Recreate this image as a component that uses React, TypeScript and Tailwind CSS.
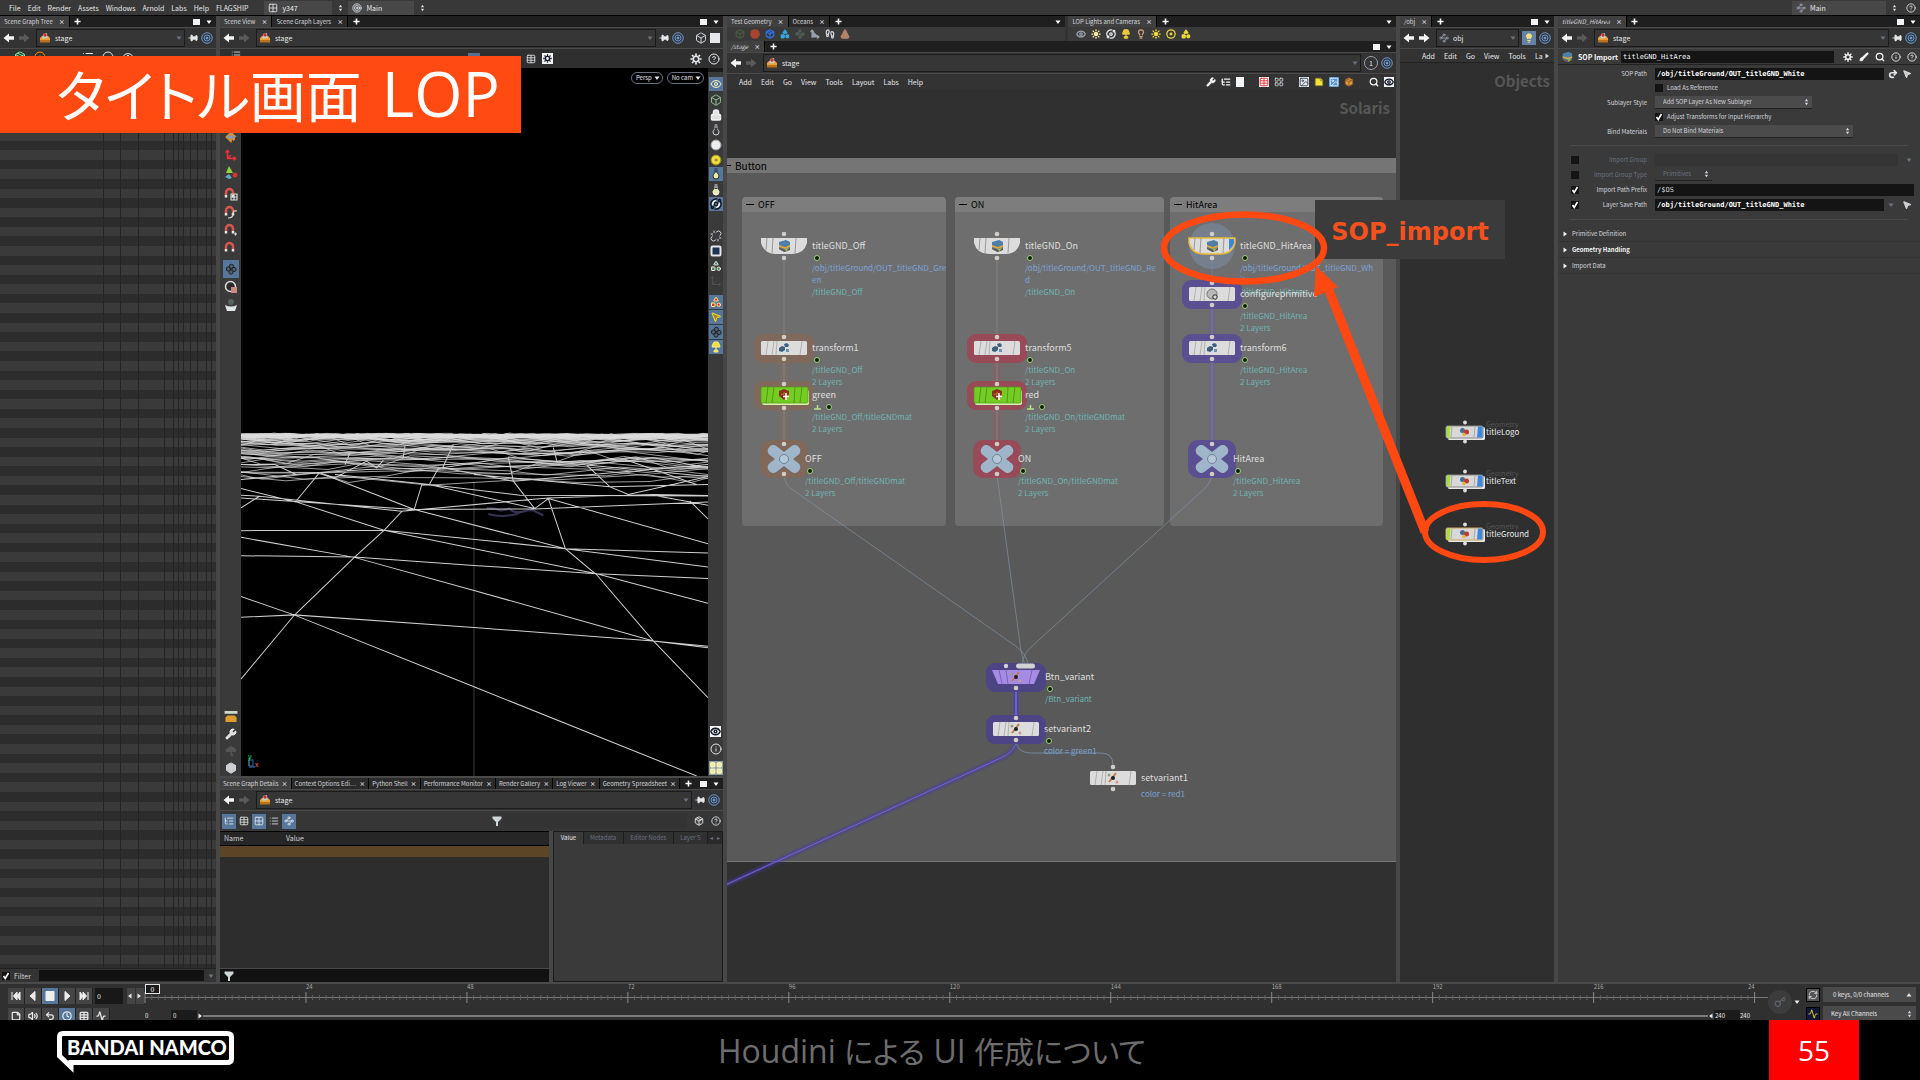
import type { ReactNode } from "react";
import {
  Activity, Box, Brush, Circle, CircleHelp, Clock, Cone, Disc, Eye, Footprints, Grid2x2,
  Image, Info, Key, Lamp, Lightbulb, LayoutGrid, List, ListTree, Lock, MousePointer2, Move3d, Orbit, Package, Pin,
  RefreshCw, Rotate3d, Search, Shapes, Square, StickyNote, Sun, Table, Target, Umbrella, Undo2, Unlink, Volume2,
  Waypoints, Wrench,
} from "lucide-react";

const ui = "font-['Noto_Sans_CJK_JP','Noto_Sans',sans-serif]";

/* ---------- small shared pieces ---------- */

const Down = ({ className = "" }: { className?: string }) => (
  <svg viewBox="0 0 6 6" className={`h-1.5 w-1.5 shrink-0 ${className}`}><path d="M0.5 1.5h5L3 5z" fill="currentColor" /></svg>
);

const UpDown = () => (
  <svg viewBox="0 0 6 12" className="h-2.5 w-[5px] shrink-0 text-gray-300"><path d="M1 5l2-3 2 3zM1 7l2 3 2-3z" fill="currentColor" /></svg>
);

const Arrow = ({ flip }: { flip?: boolean }) => (
  <svg viewBox="0 0 12 10" className={`h-2.5 w-3 shrink-0 ${flip ? "-scale-x-100" : ""}`}><path d="M0.500 5L6 0.500V3.300H11V6.700H6V9.500z" fill="currentColor" /></svg>
);

const Gear = ({ className = "h-3 w-3" }: { className?: string }) => (
  <svg viewBox="-6 -6 12 12" className={`shrink-0 ${className}`} fill="none" stroke="currentColor">
    <circle r="2.800" strokeWidth="1.800" />
    <path d="M0-5.600V-3.500M0 3.500V5.600M-5.600 0H-3.500M3.500 0H5.600M-4-4L-2.500-2.500M2.500 2.500L4 4M-4 4L-2.500 2.500M2.500-2.500L4-4" strokeWidth="1.700" />
  </svg>
);

const MagnetIcon = ({ extra }: { extra?: string }) => (
  <svg viewBox="0 0 14 14" className="h-3.5 w-3.5" fill="none">
    <path d="M2 8V5.500a3.500 3.500 0 0 1 7 0V8" stroke="#d8574f" strokeWidth="2.500" />
    <path d="M2 8v2.500M9 8v2.500" stroke="#e8e8e8" strokeWidth="2.500" />
    {extra && <path d={extra} stroke="#d8d8d8" strokeWidth="1.200" />}
  </svg>
);

const PickIcon = () => (
  <svg viewBox="0 0 14 14" className="h-3 w-3" fill="#55606a" stroke="#12181f">
    <circle cx="4" cy="7" r="2.500" /><circle cx="7.500" cy="4" r="2.500" /><circle cx="10.500" cy="7.500" r="2.500" /><circle cx="7" cy="10.500" r="2.500" />
  </svg>
);

const StageIcon = () => (
  <svg viewBox="0 0 12 12" className="h-3 w-3 shrink-0">
    <path d="M1 6l2-2h6l2 2v4H1z" fill="#e9a23b" />
    <path d="M1 8h10v2.500H1z" fill="#b9711c" />
    <path d="M3.500 6.500L4 2l4-1 .5 5z" fill="#c9d0d4" />
    <circle cx="6" cy="3" r="1.800" fill="#c8352b" />
  </svg>
);

const Radar = () => (
  <button aria-label="Follow selection" className="shrink-0">
    <svg viewBox="0 0 12 12" className="h-3 w-3" fill="none" stroke="#6f8fb8">
      <circle cx="6" cy="6" r="5.300" fill="#2c3c52" /><circle cx="6" cy="6" r="3" /><circle cx="6" cy="6" r="1" fill="#a9c2e4" />
    </svg>
  </button>
);

const PinButton = () => (
  <button aria-label="Pin" className="shrink-0 text-gray-200"><Pin className="h-2.5 w-2.5 rotate-90" fill="currentColor" /></button>
);

type TabsProps = { tabs: string[]; active?: number; italic?: boolean; square?: boolean; grow?: boolean };

function Tabs({ tabs, active = 0, italic, square = true, grow }: TabsProps) {
  return (
    <div className="flex h-[11px] shrink-0 items-stretch bg-[#1f1f1f] text-[6px] leading-[11px] text-gray-300">
      {tabs.map((t, i) => (
        <button
          key={t}
          className={`flex items-center justify-between border-r border-black whitespace-nowrap ${grow ? "flex-auto gap-0.5 px-[3px]" : "gap-1.5 px-1"} ${i === active ? "bg-[#404040]" : "bg-[#2a2a2a]"} ${italic ? "italic" : ""}`}
        >
          {t}<span className="font-bold not-italic">×</span>
        </button>
      ))}
      <button aria-label="New tab" className="flex w-4 shrink-0 items-center justify-center text-white">
        <svg viewBox="0 0 8 8" className="h-[7px] w-[7px]"><path d="M4 0.500v7M0.500 4h7" stroke="currentColor" strokeWidth="1.800" /></svg>
      </button>
      {!grow && <span className="flex-1" />}
      <span className="flex shrink-0 items-center gap-1.5 px-1 text-white">
        {square && <span className="h-1.5 w-[7px] bg-gray-100" />}
        <Down />
      </span>
    </div>
  );
}

type PathProps = { value?: string; icon?: ReactNode; forward?: boolean; children?: ReactNode };

function PathBar({ value = "stage", icon = <StageIcon />, forward, children }: PathProps) {
  return (
    <div className="flex h-[22px] shrink-0 items-center gap-[3px] border-y border-[#4a4a4a] bg-[#333] px-[3px]">
      <button aria-label="Back" className="text-gray-100"><Arrow /></button>
      <button aria-label="Forward" className={forward ? "text-gray-100" : "text-[#5a5a5a]"}><Arrow flip /></button>
      <div className="ml-[3px] flex h-[18px] min-w-0 flex-1 items-center gap-1 border border-[#1b1b1b] bg-[#363636] pr-0.5 pl-0.5">
        {icon}
        <input aria-label="Path" defaultValue={value} className="w-full min-w-0 flex-1 bg-transparent text-[7px] leading-[12px] text-gray-200 outline-none" />
        <Down className="text-gray-500" />
      </div>
      {children}
    </div>
  );
}

const Menu = ({ items }: { items: string[] }) => (
  <nav className="flex items-center gap-[9px] text-[7px] leading-[14px] text-gray-200">
    {items.map((m) => <button key={m}>{m}</button>)}
  </nav>
);

/* ---------- menu bar ---------- */

function MenuBar() {
  return (
    <header className="flex h-4 shrink-0 items-center border-b border-black bg-[#383838] pl-[9px] text-[7px] leading-[14px] text-gray-200">
      <nav className="flex gap-[7px]">
        {["File", "Edit", "Render", "Assets", "Windows", "Arnold", "Labs", "Help", "FLAGSHIP"].map((m) => <button key={m}>{m}</button>)}
      </nav>
      <button className="ml-4 flex h-[14px] w-[68px] items-center gap-1 bg-[#484848] px-1"><Grid2x2 className="h-2.5 w-2.5" />y347</button>
      <span className="mx-1 flex w-2 justify-center"><UpDown /></span>
      <button className="flex h-[14px] w-[66px] items-center gap-1 bg-[#484848] px-1"><Target className="h-2.5 w-2.5" />Main</button>
      <span className="mx-1 flex w-2 justify-center"><UpDown /></span>
      <span className="flex-1" />
      <button className="flex h-[14px] w-[94px] items-center gap-1 bg-[#484848] px-1"><Waypoints className="h-2.5 w-2.5 text-gray-400" />Main</button>
      <span className="mx-1 flex w-2 justify-center"><UpDown /></span>
      <button aria-label="Help" className="mr-1 ml-1"><CircleHelp className="h-2.5 w-2.5" /></button>
    </header>
  );
}

/* ---------- scene graph tree ---------- */

const treeColumns = [103, 120, 138, 164, 173, 178, 183, 190, 197, 206, 211];

function SceneGraphTree() {
  return (
    <section className="flex min-w-0 flex-col overflow-hidden bg-[#333]">
      <Tabs tabs={["Scene Graph Tree"]} />
      <PathBar><PinButton /><Radar /></PathBar>
      <div className="flex h-[15px] shrink-0 items-center gap-2 pl-3.5 text-gray-200">
        <Package className="h-3 w-3 text-green-300" />
        <Disc className="h-3 w-3 text-orange-400" />
        <span className="w-5" />
        <List className="h-3 w-3" />
        <Circle className="h-3 w-3" />
        <Eye className="h-3 w-3" />
      </div>
      <div className="relative flex min-h-0 flex-1 flex-col">
        {Array.from({ length: 47 }, (_, i) => (
          <div key={i} className="flex flex-1 flex-col"><div className="flex-1 bg-[#2c2c2c]" /><div className="flex-1 bg-[#3a3a3a]" /></div>
        ))}
        <div className="h-1 bg-[#2c2c2c]" />
        <svg className="absolute inset-0 h-full w-full">
          {treeColumns.map((x) => <line key={x} x1={x + 0.5} x2={x + 0.5} y1="0" y2="100%" stroke="#242424" />)}
        </svg>
      </div>
      <div className="flex h-[14px] shrink-0 items-center gap-1 border-t border-[#222] pl-0.5">
        <label className="flex items-center gap-1 text-[7px] leading-[12px] text-gray-300">
          <Check on /> Filter
        </label>
        <input aria-label="Filter" className="ml-1 h-[11px] w-full min-w-0 flex-1 bg-[#111] outline-none" />
        <Down className="mr-0.5 text-gray-500" />
      </div>
    </section>
  );
}

const Check = ({ on, label }: { on?: boolean; label?: string }) => (
  <span className="relative flex h-2 w-2 shrink-0 items-center justify-center bg-[#141414]">
    <input type="checkbox" defaultChecked={on} aria-label={label} className="peer absolute inset-0 appearance-none" />
    <svg viewBox="0 0 8 8" className="pointer-events-none hidden h-2 w-2 peer-checked:block"><path d="M1.500 4l1.700 2.500L6.500 1" fill="none" stroke="#fff" strokeWidth="1.600" /></svg>
  </span>
);

/* ---------- scene view ---------- */

// deterministic noise for the far part of the ground mesh
function makeFarMesh() {
  let seed = 11;
  const rnd = () => {
    seed = (seed * 16807) % 2147483647;
    return seed / 2147483647;
  };
  const out: string[] = [];
  for (let i = 0; i < 60; i++) {
    const t = i / 60;
    const y = 310 + 125 * t * t * t;
    const step = 34 + 190 * t;
    let x = 63 - rnd() * step;
    let d = `M${x.toFixed(0)} ${y.toFixed(0)}`;
    while (x < 1480) {
      x += step * (0.4 + rnd());
      d += `L${x.toFixed(0)} ${(y + (rnd() - 0.25) * (12 + 34 * t)).toFixed(0)}`;
    }
    out.push(d);
  }
  return out.join("");
}

const farMesh = makeFarMesh();

const nearMesh = [
  "M63 1042L222 852 403 678 492 597 545 541 583 533 605 462 628 460 655 412 668 410 700 340",
  "M63 795L222 850 762 1065 1430 1332",
  "M63 857L222 850 762 888 1300 928 1464 948",
  "M63 618L403 678 762 777 1300 928 1464 944",
  "M63 673L403 677 762 702 1130 727 1464 741",
  "M63 598L492 597 1036 652 1464 665",
  "M63 472L228 512 492 597 1130 727 1464 815",
  "M298 425L583 535 1036 652 1464 707",
  "M63 492L118 495 545 540 985 500 1300 490 1464 493",
  "M1464 1098L1300 928 1130 730 1036 652 985 502 944 532 880 450 865 378",
  "M985 502L1464 637",
  "M118 495L63 530M228 510L298 425L345 440L440 390L470 410L490 388",
  "M63 500L583 535 944 533 1464 512",
  "M944 532L628 460 345 430M628 460L900 492 1464 494",
  "M1464 563L1410 510M1300 492L1464 522",
  "M1100 402L1170 467 1225 490 1464 436M880 450L1464 400M762 430L1170 467 1464 460",
  "M668 410L880 450M1100 402L1464 436M865 378L1100 402L1300 380L1464 410",
  "M63 445L228 430 440 415 668 410 865 380M63 400L165 400 228 430M390 365L375 400M555 345L550 378M1000 350L1012 395",
  "M63 368L300 380 628 385M1215 385L1430 460",
].join("");

function Viewport() {
  return (
    <div className="relative min-w-0 flex-1 overflow-hidden bg-black">
      <svg viewBox="0 0 467 706" preserveAspectRatio="none" className="h-full w-full">
        <g transform="translate(-21 262) scale(.33333)" fill="none">
          <path d="M762 450V1332" stroke="#3c3c42" strokeWidth="3" />
          <path d="M800 530q25 0 35 6t35-6M805 548q40 12 85 0q30-14 50-10l30 14M870 535q20 18 70-4" stroke="#34344e" strokeWidth="6" />
          <path d="M63 308H1464V318H63z" fill="#d8d4d6" fillOpacity=".7" />
          <path d={farMesh} stroke="#dcdcdc" strokeWidth="2.500" strokeOpacity=".85" />
          <path d={nearMesh} stroke="#cfcfcf" strokeWidth="3" />
        </g>
        <g strokeWidth="1" fill="none">
          <path d="M8 688v8" stroke="#5fae3f" /><path d="M8 697h6" stroke="#4a74c8" /><path d="M8 690h4v6h-4z" stroke="#3b62b0" />
        </g>
      </svg>
      <span className="absolute bottom-4 left-[7px] text-[7px] leading-[8px] text-green-400">y</span>
      <span className="absolute bottom-2 left-3.5 text-[7px] leading-[8px] text-red-400">x</span>
      <div className="absolute top-1 right-1 flex gap-1 text-[6px] leading-[10px] text-gray-200">
        <button className="flex items-center gap-0.5 rounded-full border border-gray-500 pr-0.5 pl-1">Persp<Down className="h-1 w-1" /></button>
        <button className="flex items-center gap-0.5 rounded-full border border-gray-500 pr-0.5 pl-1">No cam<Down className="h-1 w-1" /></button>
      </div>
    </div>
  );
}

type Tool = { name: string; icon: ReactNode; on?: boolean; gap?: string };

const leftTools: Tool[] = [
  { name: "Rotate", icon: <Rotate3d className="h-3 w-3 text-orange-400" fill="#8a9aac" /> },
  { name: "Scale", icon: <Move3d className="h-3 w-3 text-red-500" strokeWidth={3} /> },
  { name: "Pose", icon: <svg viewBox="0 0 14 14" className="h-3.5 w-3.5"><path d="M5 0l4 7H2z" fill="#8fd43a" /><path d="M1 11l4-3 3 4-3 1z" fill="#62a8c4" /><circle cx="11" cy="9" r="2.500" fill="#d0382c" /></svg> },
  { name: "Snap to grid", icon: <MagnetIcon extra="M7 7h6v6H7zM10 7v6M7 10h6" />, gap: "mt-[3px]" },
  { name: "Snap to curve", icon: <MagnetIcon extra="M4 13Q9 13 9 9T13 6" /> },
  { name: "Snap to point", icon: <MagnetIcon extra="M10 11h3M11.500 9.500v3" /> },
  { name: "Snap multi", icon: <MagnetIcon /> },
  { name: "Pick", icon: <PickIcon />, on: true, gap: "mt-[3px]" },
  { name: "Select region", icon: <svg viewBox="0 0 14 14" className="h-3.5 w-3.5"><circle cx="6.500" cy="6.500" r="5" fill="#2a2a2a" stroke="#ddd" strokeWidth="1.500" /><path d="M7 7h6v6H7z" fill="#c98a80" /></svg> },
  { name: "Tray", icon: <svg viewBox="0 0 14 14" className="h-3.5 w-3.5"><circle cx="7" cy="4" r="3" fill="#56635f" /><path d="M1 7Q7 10 13 7L11 13H3z" fill="#dfe6e6" /></svg> },
];

const rightTools: Tool[] = [
  { name: "Reference plane", icon: <Eye className="h-3 w-3 text-yellow-100" />, on: true },
  { name: "Construction plane", icon: <Box className="h-3 w-3 text-[#8fbf8a]" /> },
  { name: "Lock camera", icon: <Lock className="h-3 w-3 text-gray-100" fill="#ddd" strokeWidth={3} /> },
  { name: "No lights", icon: <Lightbulb className="h-3 w-3 rotate-180 text-gray-300" /> },
  { name: "Headlight", icon: <Circle className="h-3 w-3 text-gray-400" fill="#eee" /> },
  { name: "Dome light", icon: <Disc className="h-3 w-3 text-[#8a8030]" fill="#f1dc3c" /> },
  { name: "Normal light", icon: <Lightbulb className="h-3 w-3 rotate-180 text-[#202a20]" fill="#e9ecaa" />, on: true },
  { name: "High quality light", icon: <Lightbulb className="h-3 w-3 rotate-180 text-gray-100" fill="#e8eca8" /> },
  { name: "Shadows", icon: <Orbit className="h-3 w-3 text-[#10151c]" fill="#e8eef6" strokeWidth={3} />, on: true },
  { name: "Links", icon: <Unlink className="h-3 w-3 text-gray-300" />, gap: "mt-4" },
  { name: "Safe area", icon: <Square className="h-3 w-3 text-gray-200" fill="#1f3352" strokeWidth={4} /> },
  { name: "Materials", icon: <Shapes className="h-3 w-3 text-gray-200" fill="#4a8a4a" /> },
  { name: "Axis", icon: <Move3d className="h-3 w-3 text-[#505050]" /> },
  { name: "Color correct", icon: <Shapes className="h-3 w-3 text-yellow-200" fill="#d33" />, on: true, gap: "mt-[7px]" },
  { name: "Handles", icon: <MousePointer2 className="h-3 w-3 text-yellow-300" fill="#a08c30" />, on: true },
  { name: "Pick mode", icon: <PickIcon />, on: true },
  { name: "Guides", icon: <Lamp className="h-3 w-3 text-yellow-200" fill="#f1dc3c" />, on: true },
];

function SceneView() {
  return (
    <div className="flex min-h-0 flex-1 flex-col">
      <Tabs tabs={["Scene View", "Scene Graph Layers"]} />
      <PathBar>
        <PinButton /><Radar />
        <button aria-label="Display" className="ml-2 text-gray-300"><Box className="h-3 w-3" /></button>
        <button aria-label="Layout" className="h-2.5 w-2.5 bg-gray-200" />
      </PathBar>
      <div className="flex h-[19px] shrink-0 items-center gap-1.5 bg-[#2f2f2f] px-[3px] text-gray-200">
        <List className="mb-2 ml-2 h-2.5 w-2.5" />
        <span className="flex-[276]" />
        <span className="h-3 w-3 bg-[#56718f]" />
        <span className="flex-[44]" />
        <Table className="h-2.5 w-2.5" />
        <span className="bg-gray-100 p-px text-gray-900"><Gear className="h-[9px] w-[9px]" /></span>
        <span className="flex-[160]" />
        <button aria-label="Settings"><Gear /></button>
        <button aria-label="Help"><CircleHelp className="h-3 w-3" /></button>
      </div>
      <div className="flex min-h-0 flex-1">
        <div className="flex w-[21px] shrink-0 flex-col items-center bg-[#3a3a3a] pt-[60px]">
          {leftTools.map((t) => (
            <button key={t.name} aria-label={t.name} className={`flex h-[18px] w-4 shrink-0 items-center justify-center ${t.gap ?? ""} ${t.on ? "bg-[#56779b]" : ""}`}>{t.icon}</button>
          ))}
          <span className="flex-1" />
          <div className="flex flex-col items-center gap-[5px] pb-0.5">
            <svg viewBox="0 0 14 13" className="h-3 w-3.5"><path d="M0 0h14v3H0z" fill="#cfd6cc" /><path d="M1 7l2-2h8l2 2v5H1z" fill="#e19a2e" /></svg>
            <Wrench className="h-3 w-3 text-gray-100" fill="#ddd" />
            <Umbrella className="h-3 w-3 text-[#555]" fill="#555" />
            <Package className="h-3 w-3 text-gray-300" fill="#ccc" />
          </div>
        </div>
        <Viewport />
        <div className="flex w-[15px] shrink-0 flex-col items-center bg-[#3a3a3a]">
          <span className="mb-[5px] h-1 w-full bg-[#1a1a1a]" />
          {rightTools.map((t) => (
            <button key={t.name} aria-label={t.name} className={`flex h-[15px] w-3.5 shrink-0 items-center justify-center ${t.gap ?? ""} ${t.on ? "border-b border-[#3a3a3a] bg-[#56779b]" : ""}`}>{t.icon}</button>
          ))}
          <span className="flex-1" />
          <div className="flex flex-col items-center gap-1.5 pb-px">
            <Eye className="h-[11px] w-[11px] bg-gray-100 text-gray-900" strokeWidth={3} />
            <Info className="h-3 w-3 text-gray-200" />
            <LayoutGrid className="h-3.5 w-3.5 bg-[#8ba0a0] text-yellow-100" fill="#f0e9a0" />
          </div>
        </div>
      </div>
    </div>
  );
}

const detailTabs = [
  "Scene Graph Details", "Context Options Edi…", "Python Shell", "Performance Monitor", "Render Gallery", "Log Viewer", "Geometry Spreadsheet",
];

function SceneGraphDetails() {
  return (
    <div className="flex h-[206px] shrink-0 flex-col border-t-2 border-[#4a4a4a]">
      <Tabs tabs={detailTabs} grow />
      <PathBar><PinButton /><Radar /></PathBar>
      <div className="flex h-5 shrink-0 items-center gap-px bg-[#363636] px-0.5 text-gray-200">
        {[ListTree, Table, Grid2x2, List, Waypoints].map((Icon, i) => (
          <button key={i} aria-label={`View mode ${i + 1}`} className={`flex h-[15px] w-3.5 items-center justify-center ${i % 2 === 0 ? "bg-[#56779b]" : ""}`}><Icon className="h-2.5 w-2.5" /></button>
        ))}
        <span className="flex-[190]" />
        <Funnel />
        <input aria-label="Filter details" className="h-3.5 min-w-0 flex-[180] bg-[#333] outline-none" />
        <button aria-label="Export" className="mx-1.5 text-gray-100"><Package className="h-2.5 w-2.5" fill="#444" /></button>
        <button aria-label="Help"><CircleHelp className="h-2.5 w-2.5" /></button>
      </div>
      <div className="flex min-h-0 flex-1 gap-1 bg-[#474747]">
        <div className="flex min-w-0 flex-[330] flex-col bg-[#2d2d2d]">
          <table className="w-full table-fixed border-collapse text-left text-[7px] leading-[13px] text-gray-300">
            <thead>
              <tr className="border-y border-black bg-[#262626]">
                <th className="w-[62px] pl-1 font-normal">Name</th>
                <th className="pl-1 font-normal">Value</th>
              </tr>
            </thead>
            <tbody><tr className="h-[11px] bg-[#5b4526]"><td /><td /></tr></tbody>
          </table>
          <span className="flex-1" />
          <div className="flex h-3.5 items-center border-t border-[#4a4a4a] bg-[#111] pl-1">
            <Funnel />
            <input aria-label="Filter values" className="w-full bg-transparent outline-none" />
          </div>
        </div>
        <div className="flex min-w-0 flex-[168] flex-col border border-[#1c1c1c] bg-[#3a3a3a]">
          <div className="flex h-3 items-stretch bg-[#2a2a2a] text-[6px] leading-[12px] whitespace-nowrap text-gray-500">
            {["Value", "Metadata", "Editor Nodes", "Layer S"].map((t, i) => (
              <button key={t} className={`flex-auto border-r border-[#1c1c1c] px-1 ${i === 0 ? "bg-[#3a3a3a] text-gray-200" : "bg-[#303030]"}`}>{t}</button>
            ))}
            <button className="px-0.5" aria-label="Previous tabs">◂</button>
            <button className="px-0.5" aria-label="More tabs">▸</button>
          </div>
        </div>
      </div>
    </div>
  );
}

const Funnel = () => (
  <svg viewBox="0 0 10 10" className="h-2.5 w-2.5 shrink-0"><path d="M0.500 0.500h9v2L6 6v4H4V6L0.500 2.500z" fill="#cfd6d8" /></svg>
);

/* ---------- network nodes ---------- */

type Kind = "import" | "body" | "material" | "null" | "variant";
type NodeData = {
  name: string; kind: Kind; x: number; y: number; halo?: string; badge?: boolean; flag?: boolean; selected?: boolean;
  icon?: "stack" | "xform" | "prim" | "set"; lines?: string[]; first?: string[];
};

const brown = "#80695b";
const red = "#984a58";
const purple = "#5a4f90";

const nodes: NodeData[] = [
  { name: "titleGND_Off", kind: "import", x: 57, y: 157, badge: true, icon: "stack", first: ["/obj/titleGround/OUT_titleGND_Gre", "en"], lines: ["/titleGND_Off"] },
  { name: "transform1", kind: "body", x: 57, y: 259, halo: brown, badge: true, icon: "xform", lines: ["/titleGND_Off", "2 Layers"] },
  { name: "green", kind: "material", x: 57, y: 306, halo: brown, badge: true, flag: true, lines: ["/titleGND_Off/titleGNDmat", "2 Layers"] },
  { name: "OFF", kind: "null", x: 57, y: 370, halo: brown, badge: true, lines: ["/titleGND_Off/titleGNDmat", "2 Layers"] },
  { name: "titleGND_On", kind: "import", x: 270, y: 157, badge: true, icon: "stack", first: ["/obj/titleGround/OUT_titleGND_Re", "d"], lines: ["/titleGND_On"] },
  { name: "transform5", kind: "body", x: 270, y: 259, halo: red, badge: true, icon: "xform", lines: ["/titleGND_On", "2 Layers"] },
  { name: "red", kind: "material", x: 270, y: 306, halo: red, badge: true, flag: true, lines: ["/titleGND_On/titleGNDmat", "2 Layers"] },
  { name: "ON", kind: "null", x: 270, y: 370, halo: red, badge: true, lines: ["/titleGND_On/titleGNDmat", "2 Layers"] },
  { name: "titleGND_HitArea", kind: "import", x: 485, y: 157, badge: true, selected: true, icon: "stack", first: ["/obj/titleGround/OUT_titleGND_Wh", "ite"], lines: ["/titleGND_HitArea"] },
  { name: "configureprimitive", kind: "body", x: 485, y: 205, halo: purple, badge: true, icon: "prim", lines: ["/titleGND_HitArea", "2 Layers"] },
  { name: "transform6", kind: "body", x: 485, y: 259, halo: purple, badge: true, icon: "xform", lines: ["/titleGND_HitArea", "2 Layers"] },
  { name: "HitArea", kind: "null", x: 485, y: 370, halo: purple, badge: true, lines: ["/titleGND_HitArea", "2 Layers"] },
  { name: "Btn_variant", kind: "variant", x: 289, y: 588, halo: "#4c4484", badge: true, icon: "set", lines: ["/Btn_variant"] },
  { name: "setvariant2", kind: "body", x: 289, y: 640, halo: "#4c4484", badge: true, icon: "set", first: ["color = green1"] },
  { name: "setvariant1", kind: "body", x: 386, y: 689, icon: "set", first: ["color = red1"] },
];

function NodeIcon({ icon }: { icon?: NodeData["icon"] }) {
  if (icon === "stack")
    return <g><path d="M-5-4l7-2 4 2v7l-6 3-5-3z" fill="#4d7fa8" /><path d="M-5-1l6 2 5-2v2l-5 2-6-2z" fill="#e0a23a" /><path d="M-5 2l6 2 5-2v2l-5 2-6-3z" fill="#6b5145" /><path d="M1 3l4-1-3 4z" fill="#8bc34a" /></g>;
  if (icon === "xform")
    return <g fill="#3f5f80"><path d="M-5 0l3-2 3 1v3l-3 2-3-1z" /><path d="M0-4l3-1 2 2-1 2-3 0z" /><path d="M2 1l3 0v3h-3z" fill="#6b93b5" /></g>;
  if (icon === "prim")
    return <g><circle r="5" fill="#b9b9b9" stroke="#777" /><circle cx="3" cy="3" r="2.200" fill="#ddd" stroke="#222" /></g>;
  if (icon === "set")
    return <g><path d="M-4 4L3-5" stroke="#c47a4a" strokeWidth="2" /><circle r="2" fill="#222" /><circle cx="4" cy="4" r="1.500" fill="#c98" /><circle cx="-4" cy="-3" r="1.500" fill="#9a9a80" /></g>;
  return null;
}

function NodeShape({ n }: { n: NodeData }) {
  const dot = n.kind === "null" ? 15 : n.kind === "import" ? 12 : 11;
  return (
    <svg viewBox="-32 -24 64 48" className="h-12 w-16 shrink-0 overflow-visible">
      {n.selected && <circle r="23" fill="#8096b4" fillOpacity=".45" />}
      {n.halo && (n.kind === "null"
        ? <rect x="-24" y="-19" width="48" height="38" rx="10" fill={n.halo} />
        : <rect x="-30" y="-14" width="60" height="29" rx="9" fill={n.halo} />)}
      {n.kind === "import" && (
        <g>
          <path d="M-23-8H23V-3Q20 8 8 8H-8Q-20 8-23-3z" fill="#dcdcdc" stroke={n.selected ? "#e8b93a" : "none"} strokeWidth="1.500" />
          {n.selected && <path d="M17-7H22V-3Q21 1 17 4z" fill="#3c86dc" />}
          <path d="M-17-8L-18 4M-11-8L-12 7M12-8L11 7" stroke="#9a9a9a" />
        </g>
      )}
      {n.kind === "body" && (
        <g><rect x="-23" y="-7" width="46" height="14" rx="1.500" fill="#dcdcdc" /><path d="M-16-7L-18 7M-10-7L-12 7M-7-7L-8 7M18-7L16 7" stroke="#a4a4a4" strokeWidth=".8" /></g>
      )}
      {n.kind === "material" && (
        <g>
          <rect x="-22" y="-5" width="47" height="15" rx="2" fill="#d5f0a8" />
          <rect x="-23" y="-8" width="47" height="16" rx="1.500" fill="#74cc23" stroke="#4f9a17" strokeWidth=".7" />
          <path d="M-16-8L-18 8M-10-8L-12 8M11-8L10 8M18-8L16 8" stroke="#4f9a17" />
          <path d="M-5-4l5-2 5 2v5l-5 4-5-4z" fill="#8a3218" /><path d="M-3-1h3v-2M2 2l3-2" stroke="#e88a3a" /><path d="M2-2v7M-1 1.500h6" stroke="#fff" strokeWidth="1.500" />
        </g>
      )}
      {n.kind === "variant" && (
        <g><path d="M-24-7H24L18 7H-18z" fill="#a58be4" /><path d="M-17-7L-14 7M-10-7L-8 7M16-7L13 7" stroke="#7a64b4" /></g>
      )}
      {n.kind === "null" && (
        <g fill="#9fb6ca">
          <rect x="-19" y="-5.500" width="38" height="11" rx="5" transform="rotate(38)" />
          <rect x="-19" y="-5.500" width="38" height="11" rx="5" transform="rotate(-38)" />
          <circle r="4.500" fill="#b4c8d8" stroke="#6f8494" />
        </g>
      )}
      <NodeIcon icon={n.icon} />
      {n.kind === "variant"
        ? <g fill="#d2d2d2"><circle cx="-10" cy="-11" r="2.200" /><rect x="0" y="-13.500" width="19" height="5" rx="2.500" /></g>
        : <circle cy={-dot} r="2.300" fill="#d2ccc8" />}
      <circle cy={n.kind === "material" ? 13 : dot} r="2.300" fill="#d2ccc8" />
    </svg>
  );
}

function NetworkNode({ n }: { n: NodeData }) {
  return (
    <div className="absolute flex items-start whitespace-nowrap" style={{ left: n.x - 32, top: n.y - 24 }}>
      <NodeShape n={n} />
      <div className={`relative pt-[17px] ${n.kind === "null" ? "-ml-[11px]" : n.kind === "variant" ? "-ml-[3px]" : "-ml-1"}`}>
        <div className="text-[9px] leading-[14px] text-[#dedede]">{n.name}</div>
        {n.badge ? (
          <div className="flex h-[9px] items-center gap-1 pl-0.5">
            {n.flag && <svg viewBox="0 0 8 6" className="h-1.5 w-2"><path d="M0 5h7M3.500 5V1" stroke="#b8e08a" strokeWidth="1.500" /></svg>}
            <span className="h-1.5 w-1.5 rounded-full border border-[#9fd47a] bg-[#111c0c]" />
          </div>
        ) : <div className="h-[3px]" />}
        {n.first?.map((l) => <div key={l} className="text-[8px] leading-[12px] text-[#7ba3d6]">{l}</div>)}
        {n.lines?.map((l) => <div key={l} className="text-[8px] leading-[12px] text-[#6fb5b2]">{l}</div>)}
      </div>
    </div>
  );
}

const boxes = [
  { name: "OFF", place: "left-[15px] w-[204px]" },
  { name: "ON", place: "left-[228px] w-[209px]" },
  { name: "HitArea", place: "left-[443px] w-[213px]" },
];

function NetworkCanvas() {
  return (
    <div className="relative min-h-0 flex-1 overflow-hidden bg-[#303030]">
      <div className="absolute top-2.5 right-1.5 text-[15px] leading-[18px] font-bold text-[#565656]">Solaris</div>
      <div className="absolute inset-x-0 top-[69px] h-[704px] border-b border-[#777] bg-[#595959]">
        <div className="flex h-[15px] items-center gap-1 bg-[#757575] text-[10px] leading-[14px] text-black">
          <span className="h-px w-1 bg-black" />Button
        </div>
      </div>
      {boxes.map((b) => (
        <div key={b.name} className={`absolute top-[108px] h-[329px] overflow-hidden rounded bg-[#6e6e6e] ${b.place}`}>
          <div className="flex h-[15px] items-center gap-1 bg-[#7d7d7d] pl-1 text-[9px] leading-[14px] text-black">
            <span className="h-px w-2 bg-black" />{b.name}
          </div>
        </div>
      ))}
      <svg className="absolute inset-0 h-full w-full" fill="none">
        <path d="M57 260V370" stroke="#776e68" strokeWidth="9" />
        <path d="M270 260V370" stroke="#7c666a" strokeWidth="9" />
        <path d="M485 204V370" stroke="#6c6880" strokeWidth="7" />
        <path d="M57 169V384M270 169V384" stroke="#828282" />
        <path d="M485 169V384" stroke="#7a72b0" />
        <path d="M57 386Q58 396 66 401L290 558Q300 566 301 576M270 386L294 562Q296 570 298 576M485 386Q484 394 476 401L302 560Q296 566 295 576" stroke="#8494a8" strokeOpacity=".65" />
        <path d="M289 600V630" stroke="#5046a0" strokeWidth="6" />
        <path d="M289 600V630" stroke="#8c84d0" />
        <path d="M289 653Q288 661 278 667L-6 798" stroke="#4436a8" strokeOpacity=".25" strokeWidth="7" />
        <path d="M289 653Q288 661 278 667L-6 798" stroke="#4c3fae" strokeOpacity=".55" strokeWidth="3" />
        <path d="M289 653Q288 661 278 667L-6 798" stroke="#7166c4" />
        <path d="M289 653Q291 664 304 664H374Q386 664 386 676" stroke="#7f98b8" strokeOpacity=".7" />
      </svg>
      {nodes.map((n) => <NetworkNode key={n.name} n={n} />)}
    </div>
  );
}

const shelfA = [
  { I: Box, c: "text-[#4c5a40]" }, { I: Disc, c: "text-[#a8452e]" }, { I: Package, c: "text-[#2f6fe0]" }, { I: Shapes, c: "text-[#38a8e0]" },
  { I: Waypoints, c: "text-[#50605a]" }, { I: Move3d, c: "text-gray-400" }, { I: Footprints, c: "text-gray-300" }, { I: Cone, c: "text-[#b08468]" },
];
const shelfB = [
  { I: Eye, c: "text-gray-400" }, { I: Sun, c: "text-[#f4e9a0]" }, { I: Orbit, c: "text-gray-200" }, { I: Lamp, c: "text-[#e8c83c]" },
  { I: Lightbulb, c: "text-[#c9a080]" }, { I: Sun, c: "text-[#f0d83c]" }, { I: Disc, c: "text-[#f0d83c]" }, { I: Shapes, c: "text-[#f0d83c]" },
];

const Shelf = ({ tabs, icons }: { tabs: string[]; icons: typeof shelfA }) => (
  <div className="flex min-w-0 flex-col bg-[#3a3a3a]">
    <Tabs tabs={tabs} square={false} />
    <div className="flex h-[14px] items-center gap-[5px] pl-2">
      {icons.map(({ I, c }, i) => <button key={i} aria-label={`${tabs[0]} tool ${i + 1}`}><I className={`h-2.5 w-2.5 ${c}`} fill={i % 2 ? "currentColor" : "none"} strokeWidth={3} /></button>)}
    </div>
  </div>
);

function NetworkPane() {
  return (
    <section className="flex min-w-0 flex-col bg-[#333]">
      <div className="grid shrink-0 grid-cols-[340fr_329fr] gap-[3px]">
        <Shelf tabs={["Test Geometry", "Oceans"]} icons={shelfA} />
        <Shelf tabs={["LOP Lights and Cameras"]} icons={shelfB} />
      </div>
      <Tabs tabs={["/stage"]} italic />
      <PathBar>
        <button className="h-3.5 w-3.5 shrink-0 rounded-full border border-gray-400 text-[7px] leading-[12px] text-gray-200">1</button>
        <Radar />
      </PathBar>
      <div className="flex h-[15px] shrink-0 items-center gap-[5px] pr-0.5 pl-3 text-gray-100">
        <Menu items={["Add", "Edit", "Go", "View", "Tools", "Layout", "Labs", "Help"]} />
        <span className="flex-1" />
        <Wrench className="h-2.5 w-2.5" fill="currentColor" />
        <ListTree className="h-2.5 w-2.5" strokeWidth={3} />
        <span className="h-2.5 w-2 bg-gray-100" />
        <Table className="ml-2.5 h-2.5 w-2.5 bg-gray-100 text-red-500" />
        <LayoutGrid className="h-2.5 w-2.5 text-gray-300" />
        <Image className="ml-2.5 h-2.5 w-2.5 bg-gray-200 text-gray-700" />
        <StickyNote className="h-2.5 w-2.5 text-[#8a8020]" fill="#f2e23c" />
        <Image className="h-2.5 w-2.5 bg-[#4f94d4] text-gray-100" />
        <Package className="h-2.5 w-2.5 text-[#8a5520]" fill="#e19a3e" />
        <Search className="ml-2.5 h-2.5 w-2.5" strokeWidth={3} />
        <Eye className="h-2.5 w-2.5 bg-gray-100 text-gray-900" strokeWidth={3} />
      </div>
      <NetworkCanvas />
    </section>
  );
}

/* ---------- objects pane ---------- */

const objects = [
  { name: "titleLogo", y: 369 },
  { name: "titleText", y: 418 },
  { name: "titleGround", y: 471, selected: true },
];

function ObjectsPane() {
  return (
    <section className="flex min-w-0 flex-col bg-[#333]">
      <Tabs tabs={["/obj"]} />
      <PathBar value="obj" icon={<Waypoints className="h-2.5 w-2.5 shrink-0 text-gray-400" />} forward>
        <button aria-label="Show hints" className="flex h-3.5 w-3.5 shrink-0 items-center justify-center bg-[#6482a6]"><Lightbulb className="h-2.5 w-2.5 text-yellow-200" fill="#f0dc70" /></button>
        <Radar />
      </PathBar>
      <div className="flex h-[14px] shrink-0 items-center justify-between overflow-hidden border-b border-[#222] pr-1 pl-[22px]">
        <Menu items={["Add", "Edit", "Go", "View", "Tools", "La"]} />
        <Down className="-rotate-90 text-gray-300" />
      </div>
      <div className="relative min-h-0 flex-1 overflow-hidden bg-[#2f2f2f]">
        <div className="absolute top-[9px] right-1 text-[15px] leading-[18px] font-bold text-[#565656]">Objects</div>
        {objects.map((o) => (
          <div key={o.name} className="absolute left-[45px] flex items-center gap-px" style={{ top: o.y - 12 }}>
            <svg viewBox="-20 -12 40 24" className="h-6 w-10 shrink-0">
              <rect x="-17" y="-5" width="37" height="13" rx="1.500" fill="#e8e8e8" />
              <rect x="-19" y="-6" width="37" height="12" rx="1.500" fill="#d8d8d8" stroke={o.selected ? "#c9a05a" : "#888"} />
              <path d="M-18-5.500h3.500L-15.500 5.500H-18z" fill="#a6e22e" /><path d="M13-5.500h4.500v11H12z" fill="#3c86dc" />
              <path d="M-13-5L-14 5M10-5L9 5" stroke="#aaa" />
              <circle cx="-2.500" cy="-1.500" r="2.500" fill="#4a6a90" /><circle cx="1.500" cy="0" r="2.500" fill="#c03a2a" /><circle cx="-1" cy="2.500" r="1.800" fill="#e8b040" />
              <circle cy="-9.500" r="1.900" fill="#ddd" /><circle cy="9.500" r="1.900" fill="#ddd" />
            </svg>
            <div>
              <div className="text-[7px] leading-[8px] text-[#545454]">Geometry</div>
              <div className="mb-2 text-[8px] leading-[8px] text-gray-200">{o.name}</div>
            </div>
          </div>
        ))}
      </div>
    </section>
  );
}

/* ---------- parameters pane ---------- */

const mono = "font-['DejaVu_Sans_Mono','Liberation_Mono',monospace] text-[7px] leading-[12px]";

type RowProps = { label?: string; id?: string; height?: string; dim?: boolean; check?: boolean; children: ReactNode };

function Row({ label, id, height = "h-[15px]", dim, check, children }: RowProps) {
  return (
    <div className={`flex items-center ${height} ${dim ? "text-gray-500" : "text-gray-300"}`}>
      <span className="w-[22px] shrink-0 pl-[13px]">{check !== undefined && <Check on={check} label={`Enable ${label}`} />}</span>
      <label htmlFor={id} className="mr-2 w-[67px] shrink-0 text-right whitespace-nowrap">{label}</label>
      {children}
    </div>
  );
}

type PickProps = { id: string; option: string; width: string; dim?: boolean };

const Pick = ({ id, option, width, dim }: PickProps) => (
  <div className={`flex h-[13px] items-center border-b border-[#222] pr-[3px] ${width} ${dim ? "" : "bg-[#4b4b4b]"}`}>
    <select id={id} disabled={dim} className="w-full appearance-none bg-transparent pl-2 text-[6px] leading-[12px] outline-none">
      <option>{option}</option>
    </select>
    <UpDown />
  </div>
);

function ParametersPane() {
  return (
    <section className="flex min-w-0 flex-col bg-[#3a3a3a]">
      <Tabs tabs={["titleGND_HitArea"]} italic />
      <PathBar><PinButton /><Radar /></PathBar>
      <div className="flex h-4 shrink-0 items-center gap-[5px] border-b border-[#222] px-[3px] text-gray-100">
        <svg viewBox="-7 -7 14 14" className="h-3 w-3 shrink-0"><NodeIcon icon="stack" /></svg>
        <label htmlFor="node-name" className="-mr-0.5 text-[7px] leading-[12px] font-bold whitespace-nowrap">SOP Import</label>
        <input id="node-name" defaultValue="titleGND_HitArea" className={`h-3 min-w-0 flex-1 bg-[#141414] px-0.5 outline-none ${mono}`} />
        <button aria-label="Gear menu" className="ml-1"><Gear className="h-2.5 w-2.5" /></button>
        <button aria-label="Brush" className="ml-px"><Brush className="h-2.5 w-2.5" fill="currentColor" /></button>
        <button aria-label="Search" className="ml-px"><Search className="h-2.5 w-2.5" strokeWidth={3} /></button>
        <button aria-label="Info" className="ml-px"><Info className="h-2.5 w-2.5" /></button>
        <button aria-label="Help" className="ml-px"><CircleHelp className="h-2.5 w-2.5" /></button>
      </div>
      <div className="flex flex-col pt-px text-[6px] leading-[12px]">
        <Row label="SOP Path" id="sop-path">
          <input id="sop-path" defaultValue="/obj/titleGround/OUT_titleGND_White" className={`h-3 min-w-0 flex-1 bg-[#141414] px-0.5 font-bold text-white outline-none ${mono}`} />
          <button aria-label="Jump to operator" className="ml-1 text-gray-200"><Undo2 className="h-2.5 w-2.5 -scale-x-100" strokeWidth={4} /></button>
          <button aria-label="Choose operator" className="mr-2 ml-1 text-gray-200"><MousePointer2 className="h-2.5 w-2.5" fill="#ccc" /></button>
        </Row>
        <Row height="h-[14px]"><label className="flex items-center gap-1"><Check />Load As Reference</label></Row>
        <Row label="Sublayer Style" id="sublayer"><Pick id="sublayer" option="Add SOP Layer As New Sublayer" width="w-[157px]" /></Row>
        <Row height="h-[14px]"><label className="flex items-center gap-1"><Check on />Adjust Transforms for Input Hierarchy</label></Row>
        <Row label="Bind Materials" id="bind"><Pick id="bind" option="Do Not Bind Materials" width="w-[198px]" /></Row>
        <hr className="mx-3 my-1.5 border-[#4a4a4a]" />
        <Row label="Import Group" id="group" check={false} dim>
          <input id="group" disabled className="mr-2 h-3 min-w-0 flex-1 bg-[#343434]" /><Down className="mr-2" />
        </Row>
        <Row label="Import Group Type" id="group-type" check={false} dim><Pick id="group-type" option="Primitives" width="w-[57px]" dim /></Row>
        <Row label="Import Path Prefix" id="prefix" check>
          <input id="prefix" defaultValue="/$OS" className={`mr-1.5 h-3 min-w-0 flex-1 bg-[#141414] px-0.5 outline-none ${mono}`} />
        </Row>
        <Row label="Layer Save Path" id="save" check height="h-4">
          <input id="save" defaultValue="/obj/titleGround/OUT_titleGND_White" className={`h-3 min-w-0 flex-1 bg-[#141414] px-0.5 font-bold text-white outline-none ${mono}`} />
          <Down className="mx-1 text-gray-500" />
          <button aria-label="Choose file" className="mr-2 ml-1 text-gray-200"><MousePointer2 className="h-2.5 w-2.5" fill="#ccc" /></button>
        </Row>
        <hr className="mx-3 my-1.5 border-[#4a4a4a]" />
        {["Primitive Definition", "Geometry Handling", "Import Data"].map((f, i) => (
          <button key={f} className={`flex h-4 items-center gap-1 border-b border-[#333] pl-1 text-left ${i === 1 ? "font-bold text-gray-100" : "text-gray-300"}`}>
            <Down className="-rotate-90 text-gray-100" />{f}
          </button>
        ))}
      </div>
    </section>
  );
}

/* ---------- playbar ---------- */

const FRAMES = 242;
const frameX = (f: number) => `${(f / FRAMES) * 100}%`;

const playIcons = [
  { name: "First frame", d: "M1 1v8M9 1v8L6 5zM6 1v8L2.500 5z" },
  { name: "Play backward", d: "M7 0.500v9L2 5z" },
  { name: "Stop", d: "M1 0.500h8v9H1z" },
  { name: "Play", d: "M3 0.500v9L8 5z" },
  { name: "Last frame", d: "M9 1v8M1 1v8L4 5zM4 1v8L7.500 5z" },
];

function Playbar() {
  return (
    <div className="flex h-[38px] shrink-0 overflow-hidden border-t-2 border-[#4a4a4a] bg-[#303030] pl-2 text-gray-200">
      <div className="flex w-[137px] shrink-0 flex-col gap-1 pt-[3px]">
        <div className="flex h-[17px] shrink-0 items-center">
          {playIcons.map((p, i) => (
            <button key={p.name} aria-label={p.name} className={`flex h-4 w-[17px] items-center justify-center border-r border-[#222] ${i === 2 ? "bg-[#56779b]" : "bg-[#454545]"}`}>
              <svg viewBox="0 0 10 10" className="h-2.5 w-2.5" stroke="#eee" fill="#eee"><path d={p.d} /></svg>
            </button>
          ))}
          <input aria-label="Current frame" defaultValue="0" className="ml-0.5 h-4 w-7 bg-[#181818] px-0.5 text-[7px] leading-[12px] outline-none" />
          <button aria-label="Previous key" className="ml-1 flex h-4 w-2 items-center bg-[#454545]"><Down className="rotate-90" /></button>
          <button aria-label="Next key" className="ml-px flex h-4 w-2 items-center bg-[#454545]"><Down className="-rotate-90" /></button>
        </div>
        <div className="flex h-4 shrink-0 items-start">
          {[StickyNote, Volume2, Undo2, Clock, Table, Activity].map((Icon, i) => (
            <button key={i} aria-label={`Playback option ${i + 1}`} className={`flex h-4 w-[17px] items-center justify-center border-r border-[#222] ${i === 3 ? "bg-[#56779b]" : "bg-[#454545]"}`}><Icon className="h-2.5 w-2.5" strokeWidth={3} /></button>
          ))}
        </div>
      </div>
      <div className="relative flex min-w-0 flex-1 flex-col">
        <svg className="h-[26px] w-full shrink-0 overflow-visible">
          <line x1="0" x2="100%" y1="13.500" y2="13.500" stroke="#777" />
          {Array.from({ length: 241 }, (_, f) => (
            <line key={f} x1={frameX(f)} x2={frameX(f)} y1={f % 24 ? 11 : 8} y2={f % 24 ? 16 : 19} stroke={f % 24 ? "#5f5f5f" : "#8a8a8a"} />
          ))}
          {[24, 48, 72, 96, 120, 144, 168, 192, 216].map((f) => (
            <text key={f} x={frameX(f)} y="5" fontSize="6" fill="#a5a5a5">{f}</text>
          ))}
          <text x={frameX(239)} y="5" fontSize="6" fill="#a5a5a5">24</text>
        </svg>
        <div className="absolute top-0 left-0 flex h-2.5 w-[15px] items-center justify-center border border-gray-200 bg-[#1b1b1b] text-[7px] leading-[8px] text-white">0</div>
        <div className="flex h-3 items-center text-[6px] leading-[12px]">
          <input aria-label="Range start" defaultValue="0" className="w-[26px] bg-transparent outline-none" />
          <input aria-label="Playback start" defaultValue="0" className="w-[26px] bg-[#1b1b1b] pl-0.5 outline-none" />
          <Down className="-rotate-90" />
          <span className="h-0.5 flex-1 bg-[#7b7b7b]" />
          <Down className="rotate-90" />
          <input aria-label="Playback end" defaultValue="240" className="w-[26px] bg-[#1b1b1b] pl-px outline-none" />
          <input aria-label="Range end" defaultValue="240" className="w-7 bg-transparent outline-none" />
        </div>
      </div>
      <div className="flex w-[152px] shrink-0 items-center gap-0.5">
        <button aria-label="Set key" className="flex h-6 w-6 items-center justify-center rounded-full bg-[#3c3c3c] text-gray-500"><Key className="h-3 w-3" /></button>
        <Down />
        <div className="ml-1 flex flex-1 flex-col gap-1 pt-1 pr-1 text-[6px] leading-[12px]">
          <div className="flex items-center gap-[3px]">
            <RefreshCw className="h-3.5 w-3.5 border border-black bg-[#555] p-px" />
            <button className="flex h-[15px] flex-1 items-center justify-between bg-[#4a4a4a] pr-1 pl-2.5">0 keys, 0/0 channels<Down className="rotate-180" /></button>
          </div>
          <div className="flex items-center gap-[3px]">
            <Activity className="h-3.5 w-3.5 border border-black bg-[#10183a] p-px text-yellow-300" />
            <button className="flex h-[15px] flex-1 items-center justify-between bg-[#4a4a4a] pr-1 pl-2">Key All Channels<UpDown /></button>
          </div>
        </div>
      </div>
    </div>
  );
}

/* ---------- slide chrome ---------- */

function Footer() {
  return (
    <footer className="relative flex h-[60px] shrink-0 items-center justify-center bg-black pr-14">
      <svg viewBox="0 0 180 44" className="absolute top-2.5 left-[55px] h-11 w-[180px]" role="img" aria-label="BANDAI NAMCO">
        <path d="M8 3.500H172Q176.500 3.500 176.500 7V29Q176.500 32.500 172 32.500H16V37L4.500 26V7Q4.500 3.500 8 3.500z" fill="none" stroke="#fff" strokeWidth="5" />
        <text x="12" y="25" fontFamily="Lato" fontWeight="900" fontSize="20" fill="#fff">BANDAI NAMCO</text>
      </svg>
      <p className="text-[32px] leading-[40px] whitespace-nowrap text-[#6d6d6d] font-['Open_Sans','Noto_Sans_CJK_JP',sans-serif]">
        Houdini <Ja size="text-[30px]">による</Ja> UI <Ja size="text-[30px]">作成について</Ja>
      </p>
      <div className="absolute inset-y-0 right-[61px] flex w-[90px] items-center justify-center bg-[#fe0000] font-['Open_Sans',sans-serif] text-[28px] text-white">55</div>
    </footer>
  );
}

const Ja = ({ size, children }: { size: string; children: string }) => (
  <span lang="ja" className={`font-['Noto_Sans_CJK_JP',sans-serif] [font-feature-settings:'palt'] ${size}`}>{children}</span>
);

function Callouts() {
  return (
    <>
      <div className="absolute top-[200px] left-[1315px] flex h-[59px] w-[190px] items-center justify-center bg-[#3b3b3b] pt-1 font-['DejaVu_Sans',sans-serif] text-[24px] font-bold text-[#f4511e]">SOP_import</div>
      <svg className="pointer-events-none absolute inset-0 h-full w-full" fill="none" stroke="#ff4812">
        <ellipse cx="1244" cy="248" rx="80" ry="33.500" strokeWidth="6.500" />
        <ellipse cx="1484" cy="532" rx="59" ry="28" strokeWidth="6" />
        <path d="M1425 532L1328 288" strokeWidth="9" />
        <path d="M1316 266L1338 287L1314 297z" fill="#ff4812" stroke="none" />
      </svg>
      <h1 className="absolute top-14 left-0 flex h-[77px] w-[521px] items-center bg-[#ff4a12] pb-1 pl-14 whitespace-nowrap text-white">
        <Ja size="text-[56px] leading-[72px]">タイトル画面</Ja>
        <span className="ml-5 font-['Open_Sans',sans-serif] text-[62px] leading-[72px]">LOP</span>
      </h1>
    </>
  );
}

export default function App() {
  return (
    <div className={`relative flex h-screen flex-col overflow-hidden bg-[#303030] ${ui}`}>
      <MenuBar />
      <main className="grid min-h-0 flex-1 grid-cols-[216fr_503fr_669fr_154fr_362fr] grid-rows-[minmax(0,1fr)] gap-1 bg-[#474747]">
        <SceneGraphTree />
        <section className="flex min-w-0 flex-col bg-[#333]">
          <SceneView />
          <SceneGraphDetails />
        </section>
        <NetworkPane />
        <ObjectsPane />
        <ParametersPane />
      </main>
      <Playbar />
      <Footer />
      <Callouts />
    </div>
  );
}
